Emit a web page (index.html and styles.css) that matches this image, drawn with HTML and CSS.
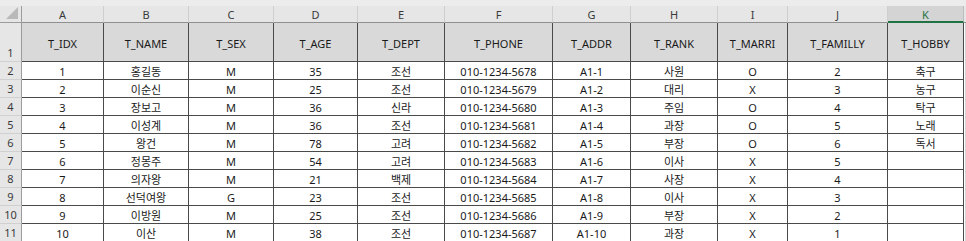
FILE: index.html
```html
<!DOCTYPE html>
<html lang="ko">
<head>
<meta charset="utf-8">
<link rel="stylesheet" href="styles.css">
</head>
<body>
<div class="band"></div>
<div class="sheet">
  <div class="corner"><span class="tri"></span></div>
  <div class="ch">A</div><div class="ch">B</div><div class="ch">C</div><div class="ch">D</div><div class="ch">E</div><div class="ch">F</div><div class="ch">G</div><div class="ch">H</div><div class="ch">I</div><div class="ch">J</div><div class="ch sel">K</div><div class="gut hdr"></div>

  <div class="rh">1</div>
  <div class="hd">T_IDX</div><div class="hd">T_NAME</div><div class="hd">T_SEX</div><div class="hd">T_AGE</div><div class="hd">T_DEPT</div><div class="hd">T_PHONE</div><div class="hd">T_ADDR</div><div class="hd">T_RANK</div><div class="hd">T_MARRI</div><div class="hd">T_FAMILLY</div><div class="hd">T_HOBBY</div><div class="gut"></div>

  <div class="rh">2</div>
  <div class="c">1</div><div class="c">홍길동</div><div class="c">M</div><div class="c">35</div><div class="c">조선</div><div class="c">010-1234-5678</div><div class="c">A1-1</div><div class="c">사원</div><div class="c">O</div><div class="c">2</div><div class="c">축구</div><div class="gut"></div>

  <div class="rh">3</div>
  <div class="c">2</div><div class="c">이순신</div><div class="c">M</div><div class="c">25</div><div class="c">조선</div><div class="c">010-1234-5679</div><div class="c">A1-2</div><div class="c">대리</div><div class="c">X</div><div class="c">3</div><div class="c">농구</div><div class="gut"></div>

  <div class="rh">4</div>
  <div class="c">3</div><div class="c">장보고</div><div class="c">M</div><div class="c">36</div><div class="c">신라</div><div class="c">010-1234-5680</div><div class="c">A1-3</div><div class="c">주임</div><div class="c">O</div><div class="c">4</div><div class="c">탁구</div><div class="gut"></div>

  <div class="rh">5</div>
  <div class="c">4</div><div class="c">이성계</div><div class="c">M</div><div class="c">36</div><div class="c">조선</div><div class="c">010-1234-5681</div><div class="c">A1-4</div><div class="c">과장</div><div class="c">O</div><div class="c">5</div><div class="c">노래</div><div class="gut"></div>

  <div class="rh">6</div>
  <div class="c">5</div><div class="c">왕건</div><div class="c">M</div><div class="c">78</div><div class="c">고려</div><div class="c">010-1234-5682</div><div class="c">A1-5</div><div class="c">부장</div><div class="c">O</div><div class="c">6</div><div class="c">독서</div><div class="gut"></div>

  <div class="rh">7</div>
  <div class="c">6</div><div class="c">정몽주</div><div class="c">M</div><div class="c">54</div><div class="c">고려</div><div class="c">010-1234-5683</div><div class="c">A1-6</div><div class="c">이사</div><div class="c">X</div><div class="c">5</div><div class="c"></div><div class="gut"></div>

  <div class="rh">8</div>
  <div class="c">7</div><div class="c">의자왕</div><div class="c">M</div><div class="c">21</div><div class="c">백제</div><div class="c">010-1234-5684</div><div class="c">A1-7</div><div class="c">사장</div><div class="c">X</div><div class="c">4</div><div class="c"></div><div class="gut"></div>

  <div class="rh">9</div>
  <div class="c">8</div><div class="c">선덕여왕</div><div class="c">G</div><div class="c">23</div><div class="c">조선</div><div class="c">010-1234-5685</div><div class="c">A1-8</div><div class="c">이사</div><div class="c">X</div><div class="c">3</div><div class="c"></div><div class="gut"></div>

  <div class="rh">10</div>
  <div class="c">9</div><div class="c">이방원</div><div class="c">M</div><div class="c">25</div><div class="c">조선</div><div class="c">010-1234-5686</div><div class="c">A1-9</div><div class="c">부장</div><div class="c">X</div><div class="c">2</div><div class="c"></div><div class="gut"></div>

  <div class="rh">11</div>
  <div class="c">10</div><div class="c">이산</div><div class="c">M</div><div class="c">38</div><div class="c">조선</div><div class="c">010-1234-5687</div><div class="c">A1-10</div><div class="c">과장</div><div class="c">X</div><div class="c">1</div><div class="c"></div><div class="gut"></div>
</div>
</body>
</html>
```
FILE: styles.css
```css
* { box-sizing: border-box; }
html, body { margin: 0; padding: 0; background: #ffffff; }
body {
  font-family: "Noto Sans", "Noto Sans CJK KR", sans-serif;
  font-size: 11px;
  color: #1a1a1a;
  width: 966px;
  overflow: hidden;
}
.band { height: 6px; background: #ececec; }
.sheet {
  display: grid;
  grid-template-columns: 22px 82px 85px 85px 84px 87px 108px 78px 87px 70px 100px 76px 2px;
  grid-template-rows: 17px 39px repeat(10, 18px);
}
.sheet > div {
  display: flex;
  align-items: center;
  justify-content: center;
  white-space: nowrap;
  line-height: 1;
}
.corner {
  background: #e6e6e6;
  border-right: 1px solid #9c9c9c;
  border-bottom: 1px solid #9c9c9c;
  position: relative;
}
.tri {
  position: absolute;
  right: 3px;
  bottom: 3px;
  width: 0;
  height: 0;
  border-left: 12px solid transparent;
  border-bottom: 12px solid #b9b9b9;
}
.ch {
  background: #e6e6e6;
  color: #3a3a3a;
  border-right: 1px solid #cfcfcf;
  border-bottom: 1px solid #8f8f8f;
  padding-top: 1px;
}
.ch.sel {
  background: #d4d4d4;
  color: #217346;
  border-bottom: 2px solid #217346;
  border-right-color: #bdbdbd;
}
.gut { background: #ffffff; border-right: 1px solid #d4d4d4; }
.gut.hdr { background: #e6e6e6; border-right: 0; border-bottom: 1px solid #8f8f8f; }
.sheet > .rh {
  background: #e6e6e6;
  color: #3a3a3a;
  border-right: 1px solid #9c9c9c;
  border-bottom: 1px solid #d0d0d0;
  align-items: flex-end;
  padding-bottom: 3px;
}
.hd {
  background: #d9d9d9;
  color: #1a1a1a;
  border-right: 1px solid #4a4a4a;
  border-bottom: 1px solid #4a4a4a;
  padding-top: 3px;
}
.c {
  border-right: 1px solid #4a4a4a;
  border-bottom: 1px solid #4a4a4a;
  padding-top: 1px;
}
```
